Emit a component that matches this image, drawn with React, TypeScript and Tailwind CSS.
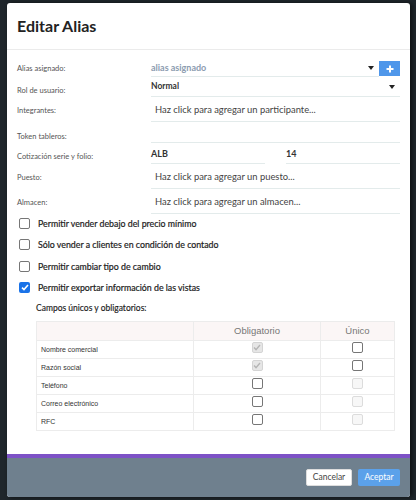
import React from 'react';

const sans = { fontFamily: 'Lato, "Noto Sans", sans-serif' };

function Caret() {
  return (
    <svg width="6" height="4" viewBox="0 0 6 4" className="shrink-0">
      <path d="M0 0h6L3 4z" fill="#222" />
    </svg>
  );
}

function CheckBox({ checked = false }: { checked?: boolean }) {
  if (checked) {
    return (
      <span className="flex h-[11px] w-[11px] shrink-0 items-center justify-center rounded-[2px] bg-[#1a73e8]">
        <svg width="8" height="7" viewBox="0 0 8 7">
          <path d="M1 3.6l2 2L7 1" stroke="#fff" strokeWidth="1.6" fill="none" />
        </svg>
      </span>
    );
  }
  return <span className="h-[11px] w-[11px] shrink-0 rounded-[2px] border border-[#767676] bg-white" />;
}

function TableBox({ state }: { state: 'on-disabled' | 'off' | 'off-disabled' }) {
  if (state === 'on-disabled') {
    return (
      <span className="mx-auto flex h-[11px] w-[11px] items-center justify-center rounded-[2px] border border-[#d4d4d4] bg-[#e6e6e6]">
        <svg width="8" height="7" viewBox="0 0 8 7">
          <path d="M1 3.6l2 2L7 1" stroke="#b5b5b5" strokeWidth="1.4" fill="none" />
        </svg>
      </span>
    );
  }
  if (state === 'off-disabled') {
    return <span className="mx-auto block h-[11px] w-[11px] rounded-[2px] border border-[#dcdcdc] bg-[#f7f7f7]" />;
  }
  return <span className="mx-auto block h-[11px] w-[11px] rounded-[2px] border border-[#767676] bg-white" />;
}

const permisos = [
  { label: 'Permitir vender debajo del precio mínimo', checked: false },
  { label: 'Sólo vender a clientes en condición de contado', checked: false },
  { label: 'Permitir cambiar tipo de cambio', checked: false },
  { label: 'Permitir exportar información de las vistas', checked: true },
];

const campos: { name: string; obligatorio: 'on-disabled' | 'off'; unico: 'off' | 'off-disabled' }[] = [
  { name: 'Nombre comercial', obligatorio: 'on-disabled', unico: 'off' },
  { name: 'Razón social', obligatorio: 'on-disabled', unico: 'off' },
  { name: 'Teléfono', obligatorio: 'off', unico: 'off-disabled' },
  { name: 'Correo electrónico', obligatorio: 'off', unico: 'off-disabled' },
  { name: 'RFC', obligatorio: 'off', unico: 'off-disabled' },
];

export default function App() {
  return (
    <div className="min-h-[500px] bg-[#1f262b] pt-[3px] pl-[7px]" style={sans}>
      <div className="flex h-[494px] w-[403px] flex-col overflow-hidden rounded-[3px] bg-white shadow-[2px_0_4px_rgba(0,0,0,0.6)]">
        {/* Header */}
        <div className="flex h-[47px] items-center border-b border-[#ebebeb] px-[10px]">
          <h1 className="text-[16px] font-bold text-[#222]">Editar Alias</h1>
        </div>

        {/* Body */}
        <div className="flex-1 px-[10px]">
          <div className="grid grid-cols-[134px_1fr] text-[7.5px] text-[#555]">
            {/* Alias asignado */}
            <div className="flex h-[27px] items-end pb-[3px]">Alias asignado:</div>
            <div className="flex h-[27px] items-end">
              <div className="flex h-[17px] flex-1 items-center border-b border-[#e3ebeb] pr-[5px]">
                <span className="mb-[1px] flex-1 text-[9px] font-bold text-[#8b9cb0]">alias asignado</span>
                <Caret />
              </div>
              <button className="mb-[1px] flex h-[15px] w-[21px] items-center justify-center bg-[#4f97ea]">
                <svg width="8" height="8" viewBox="0 0 8 8">
                  <path d="M4 0.5v7M0.5 4h7" stroke="#fff" strokeWidth="2" />
                </svg>
              </button>
            </div>

            {/* Rol de usuario */}
            <div className="flex h-[20px] items-end pb-[1px]">Rol de usuario:</div>
            <div className="flex h-[20px] items-center border-b border-[#e3ebeb] pr-[5px]">
              <span className="mb-[1px] flex-1 text-[8.5px] font-bold text-[#333]">Normal</span>
              <Caret />
            </div>

            {/* Integrantes */}
            <div className="flex h-[25px] items-center pt-[3px]">Integrantes:</div>
            <div className="flex h-[25px] items-center border-b border-[#e3ebeb] pl-[4px] pt-[3px] text-[9.4px] text-[#444]">
              Haz click para agregar un participante...
            </div>

            {/* Token tableros */}
            <div className="flex h-[21px] items-center pt-[8px]">Token tableros:</div>
            <div className="h-[21px] border-b border-[#e3ebeb]" />

            {/* Cotización serie y folio */}
            <div className="flex h-[21px] items-center pt-[7px]">Cotización serie y folio:</div>
            <div className="flex h-[21px] items-stretch gap-[21px]">
              <div className="flex w-[114px] items-center border-b border-[#e3ebeb] pt-[1px] text-[9px] font-bold text-[#333]">
                ALB
              </div>
              <div className="flex flex-1 items-center border-b border-[#e3ebeb] pt-[1px] text-[9px] font-bold text-[#333]">
                14
              </div>
            </div>

            {/* Puesto */}
            <div className="flex h-[25px] items-center pt-[3px]">Puesto:</div>
            <div className="flex h-[25px] items-center border-b border-[#e3ebeb] pl-[4px] pt-[3px] text-[9.4px] text-[#444]">
              Haz click para agregar un puesto...
            </div>

            {/* Almacen */}
            <div className="flex h-[25px] items-center pt-[3px]">Almacen:</div>
            <div className="flex h-[25px] items-center border-b border-[#e3ebeb] pl-[4px] pt-[3px] text-[9.4px] text-[#444]">
              Haz click para agregar un almacen...
            </div>
          </div>

          {/* Permisos */}
          <div className="mt-[-1px] flex flex-col">
            {permisos.map((p) => (
              <label key={p.label} className="flex h-[21.3px] items-center gap-[8px] pl-[2px]">
                <CheckBox checked={p.checked} />
                <span className="text-[8.8px] text-[#222] [-webkit-text-stroke:0.2px_#222]">{p.label}</span>
              </label>
            ))}
          </div>

          {/* Campos */}
          <div className="pl-[19px] pr-[5px]">
            <p className="mt-[4px] text-[8.5px] text-[#222] [-webkit-text-stroke:0.15px_#222]">
              Campos únicos y obligatorios:
            </p>
            <table
              className="mt-[6px] w-full border-collapse text-[7px] text-[#333]"
              style={{ fontFamily: '"Liberation Sans", Arial, sans-serif' }}
            >
              <thead>
                <tr className="h-[19px] bg-[#fbf6f6]">
                  <th className="w-[157px] border border-[#ececec]" />
                  <th className="w-[127px] border border-[#ececec] text-[9.5px] font-normal text-[#777]">Obligatorio</th>
                  <th className="border border-[#ececec] text-[9.5px] font-normal text-[#777]">Único</th>
                </tr>
              </thead>
              <tbody>
                {campos.map((c) => (
                  <tr key={c.name} className="h-[18px]">
                    <td className="border border-[#ececec] pl-[4px] pt-[2px]">{c.name}</td>
                    <td className="border border-[#ececec] pb-[3px]">
                      <TableBox state={c.obligatorio} />
                    </td>
                    <td className="border border-[#ececec] pb-[3px]">
                      <TableBox state={c.unico} />
                    </td>
                  </tr>
                ))}
              </tbody>
            </table>
          </div>
        </div>

        {/* Footer */}
        <div className="h-[4px] bg-[#7d52c6]" />
        <div className="flex h-[39px] items-center justify-end gap-[6px] bg-[#6f808e] pr-[10px] pb-[1px]">
          <button className="h-[17px] w-[46px] rounded-[2px] border border-[#ddd] bg-white text-[8.5px] text-[#444]">
            Cancelar
          </button>
          <button className="h-[17px] w-[42px] rounded-[2px] bg-[#5ba1ea] text-[8.5px] text-white">
            Aceptar
          </button>
        </div>
      </div>
    </div>
  );
}
